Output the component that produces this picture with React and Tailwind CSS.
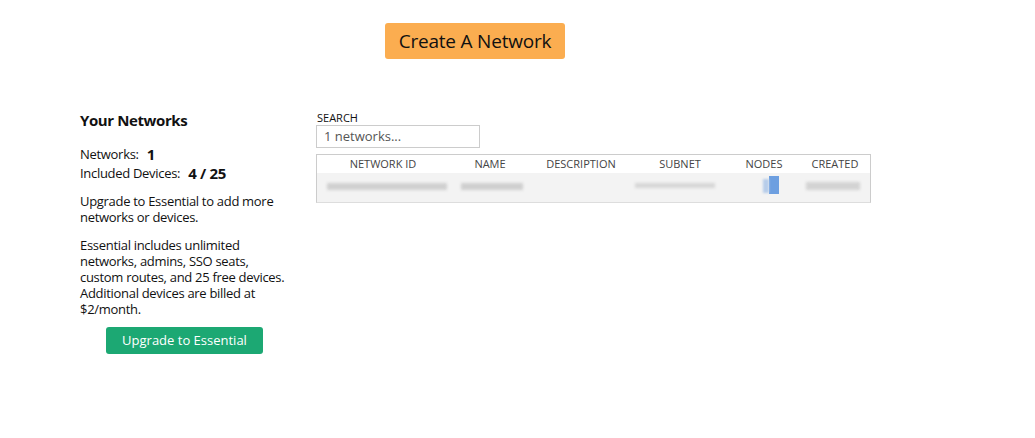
export default function App() {
  const font = { fontFamily: '"Open Sans", "Noto Sans", "Liberation Sans", sans-serif' };
  return (
    <div className="w-[1035px] h-[438px] bg-white text-[#111] flex flex-col" style={font}>
      <div className="flex justify-center pt-[23px] pr-[85px]">
        <button className="h-[36px] w-[180px] rounded-[3px] bg-[#fbad50] text-[19px] text-[#111] tracking-[-0.2px]">Create A Network</button>
      </div>
      <div className="flex pt-[50px]">
        <div className="w-[236px] ml-[80px] flex flex-col tracking-[-0.3px]">
          <div className="text-[15px] font-bold leading-[20px] mt-[1px] tracking-[-0.4px]">Your Networks</div>
          <div className="mt-[15px] text-[13px] leading-[19px]">
            <div className="flex items-center">Networks:<span className="ml-[8px] text-[15px] font-bold">1</span></div>
            <div className="flex items-center">Included Devices:<span className="ml-[8px] text-[15px] font-bold">4 / 25</span></div>
          </div>
          <p className="mt-[10px] text-[13px] leading-[16px] whitespace-nowrap">Upgrade to Essential to add more<br />networks or devices.</p>
          <p className="mt-[12px] text-[13px] leading-[16px] whitespace-nowrap">Essential includes unlimited<br />networks, admins, SSO seats,<br />custom routes, and 25 free devices.<br />Additional devices are billed at<br />$2/month.</p>
          <div className="mt-[10px] pl-[26px]">
            <button className="h-[27px] w-[157px] rounded-[3px] bg-[#1ca873] text-white text-[13px] tracking-normal">Upgrade to Essential</button>
          </div>
        </div>
        <div className="flex flex-col mt-[3px]">
          <div className="text-[11px] leading-[12px] pl-[1px]">SEARCH</div>
          <div className="mt-[1px] w-[164px] h-[23px] border border-[#ccc] text-[13px] text-[#555] pl-[7px] flex items-center">1 networks...</div>
          <div className="mt-[6px] w-[555px] border border-[#ccc] border-b-[#ddd]">
            <div className="grid grid-cols-[132px_82px_100px_98px_70px_72px] h-[18px] items-center text-[11px] text-[#444] text-center">
              <div>NETWORK ID</div>
              <div>NAME</div>
              <div>DESCRIPTION</div>
              <div>SUBNET</div>
              <div>NODES</div>
              <div>CREATED</div>
            </div>
            <div className="h-[29px] bg-[#f3f3f3] relative overflow-visible">
              <div className="absolute left-[10px] top-[10px] w-[120px] h-[7px] bg-[#d0d0d0] blur-[1.5px]"></div>
              <div className="absolute left-[144px] top-[10px] w-[62px] h-[7px] bg-[#cfcfcf] blur-[1.5px]"></div>
              <div className="absolute left-[318px] top-[10px] w-[80px] h-[5px] bg-[#d6d6d6] blur-[1.5px]"></div>
              <div className="absolute left-[452px] top-[3px] w-[10px] h-[18px] bg-[#6d9fe0] blur-[0.5px]"></div>
              <div className="absolute left-[446px] top-[6px] w-[6px] h-[14px] bg-[#b7cdea] blur-[1px]"></div>
              <div className="absolute left-[489px] top-[9px] w-[54px] h-[8px] bg-[#d3d3d3] blur-[1.5px]"></div>
            </div>
          </div>
        </div>
      </div>
    </div>
  );
}
